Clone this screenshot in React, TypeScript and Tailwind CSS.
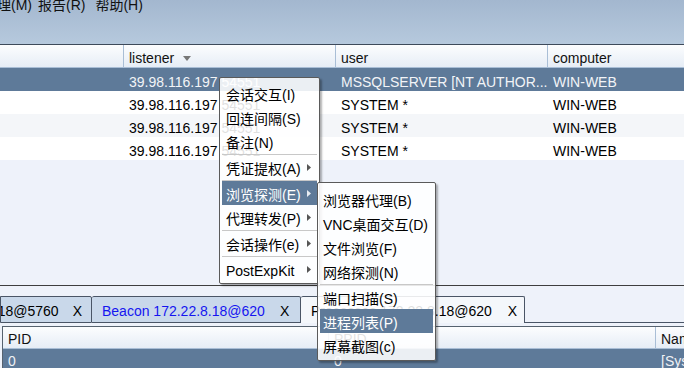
const FONT = "font-['Liberation_Sans','Noto_Sans_CJK_SC',sans-serif]";

const ROWS = [
  { listener: "39.98.116.197 54551", user: "MSSQLSERVER [NT AUTHOR...", computer: "WIN-WEB", bg: "bg-[#5e7a99] text-[#f2f4f7]" },
  { listener: "39.98.116.197 54551", user: "SYSTEM *", computer: "WIN-WEB", bg: "bg-white text-black" },
  { listener: "39.98.116.197 54551", user: "SYSTEM *", computer: "WIN-WEB", bg: "bg-[#f4f6f9] text-black" },
  { listener: "39.98.116.197 54551", user: "SYSTEM *", computer: "WIN-WEB", bg: "bg-white text-black" },
];

type Entry = { label?: string; arrow?: boolean; active?: boolean; sep?: boolean };

const MAIN_MENU: Entry[] = [
  { label: "会话交互(I)" },
  { label: "回连间隔(S)" },
  { label: "备注(N)" },
  { sep: true },
  { label: "凭证提权(A)", arrow: true },
  { sep: true },
  { label: "浏览探测(E)", arrow: true, active: true },
  { label: "代理转发(P)", arrow: true },
  { sep: true },
  { label: "会话操作(e)", arrow: true },
  { sep: true },
  { label: "PostExpKit", arrow: true },
];

const SUB_MENU: Entry[] = [
  { label: "浏览器代理(B)" },
  { label: "VNC桌面交互(D)" },
  { label: "文件浏览(F)" },
  { label: "网络探测(N)" },
  { sep: true },
  { label: "端口扫描(S)" },
  { label: "进程列表(P)", active: true },
  { label: "屏幕截图(c)" },
];

function Arrow({ light }: { light?: boolean }) {
  return (
    <svg width="4" height="7" viewBox="0 0 4 7" className="shrink-0 -mt-[2px]">
      <path d="M0 0 L4 3.5 L0 7 Z" fill={light ? "#e8ecf2" : "#555"} />
    </svg>
  );
}

function Menu({ entries, pl }: { entries: Entry[]; pl: string }) {
  return entries.map((e, i) =>
    e.sep ? (
      <div key={i} className="h-[2px] border-b border-[#c8c8c8]" />
    ) : (
      <div
        key={i}
        className={`h-6 flex items-center ${pl} pr-[6px] pt-[3px] whitespace-nowrap ${
          e.active ? "bg-[#5e7a99] text-white" : "text-black"
        }`}
      >
        <span className="flex-1">{e.label}</span>
        {e.arrow && <Arrow light={e.active} />}
      </div>
    )
  );
}

function HeaderCell({ w, children }: { w: string; children?: React.ReactNode }) {
  return (
    <div className={`${w} shrink-0 h-full flex items-center pl-[5px] pt-[3px] border-r border-[#a9bed6] whitespace-nowrap overflow-hidden`}>
      {children}
    </div>
  );
}

export default function App() {
  return (
    <div className={`relative w-[684px] h-[368px] overflow-hidden bg-[#eef2fa] text-[14px] leading-4 ${FONT}`}>
      {/* menu bar */}
      <div className="h-[44px] overflow-hidden bg-gradient-to-b from-[#a3b7cf] to-[#b6c9dd]">
        <div className="flex -mt-[3px] text-[#111] whitespace-nowrap">
          <span className="-ml-[3px]">理(M)</span>
          <span className="ml-[6px]">报告(R)</span>
          <span className="ml-[10px]">帮助(H)</span>
        </div>
      </div>
      <div className="h-px bg-[#3e4a5a]" />

      {/* sessions table */}
      <div className="h-[23px] flex bg-gradient-to-b from-[#fcfdfe] to-[#e6edf6] border-b border-[#a9bed6] text-[#111]">
        <HeaderCell w="w-[124px]" />
        <HeaderCell w="w-[212px]">
          listener
          <svg width="8" height="5" viewBox="0 0 8 5" className="ml-[9px] mt-[1px]">
            <path d="M0 0 L8 0 L4 5 Z" fill="#777" />
          </svg>
        </HeaderCell>
        <HeaderCell w="w-[212px]">user</HeaderCell>
        <HeaderCell w="w-[200px]">computer</HeaderCell>
      </div>
      {ROWS.map((r, i) => (
        <div key={i} className={`h-[23px] flex items-center pt-[4px] whitespace-nowrap ${r.bg}`}>
          <div className="w-[124px] shrink-0" />
          <div className="w-[212px] shrink-0 pl-[5px] overflow-hidden">{r.listener}</div>
          <div className="w-[212px] shrink-0 pl-[5px] overflow-hidden">{r.user}</div>
          <div className="shrink-0 pl-[5px]">{r.computer}</div>
        </div>
      ))}
      <div className="h-[125px]" />
      <div className="h-px bg-[#3e3e3e]" />

      {/* tabs */}
      <div className="h-[37px] flex items-end whitespace-nowrap">
        <div className="w-[92px] h-[27px] shrink-0 flex items-center justify-end overflow-hidden bg-[#c9d8ea] border border-[#4a5566] rounded-tr-[2px] pr-[9px] pt-[2px] text-black">
          <span className="shrink-0">Beacon 172.22.8.18@5760</span>
          <span className="shrink-0 ml-[14px]">X</span>
        </div>
        <div className="w-[209px] h-[27px] shrink-0 flex items-center bg-[#c9d8ea] border border-l-0 border-[#4a5566] rounded-t-[2px] pl-[10px] pt-[2px] text-[#1515f0]">
          <span>Beacon 172.22.8.18@620</span>
          <span className="ml-[15px] text-black">X</span>
        </div>
        <div className="w-[224px] h-[27px] shrink-0 flex items-center bg-[#f4f7fb] border border-b-0 border-l-0 border-[#4a5566] rounded-t-[2px] pl-[10px] pt-[2px] text-black">
          <span>Processes 172.22.8.18@620</span>
          <span className="ml-[16px]">X</span>
        </div>
        <div className="flex-1 h-px bg-[#4a5566]" />
      </div>
      <div className="h-[3px]" />

      {/* process table */}
      <div className="ml-[2px] border-l border-t border-[#56626f] bg-white">
        <div className="h-[22px] flex bg-gradient-to-b from-[#fcfdfe] to-[#e6edf6] border-b border-[#a9bed6] text-[#111]">
          <HeaderCell w="w-[326px]">PID</HeaderCell>
          <HeaderCell w="w-[327px]">PPID</HeaderCell>
          <HeaderCell w="w-[60px]">Name</HeaderCell>
        </div>
        <div className="h-[20px] flex items-center pt-[4px] bg-[#5e7a99] text-[#eef1f5] whitespace-nowrap">
          <div className="w-[326px] shrink-0 pl-[5px]">0</div>
          <div className="w-[327px] shrink-0 pl-[5px]">0</div>
          <div className="shrink-0 pl-[5px]">[System Process]</div>
        </div>
      </div>

      {/* popup menus */}
      <div className="absolute left-[219px] top-[77px] w-[101px] border border-[#5a5a5a] rounded-[2px] bg-white/[0.88] px-[2px] pt-[3px] pb-[2px] shadow-[2px_2px_2px_rgba(0,0,0,0.3)]">
        <Menu entries={MAIN_MENU} pl="pl-[4px]" />
      </div>
      <div className="absolute left-[317px] top-[182px] w-[119px] border border-[#5a5a5a] rounded-[2px] bg-white/[0.88] px-[2px] pt-[4px] pb-[3px] shadow-[2px_2px_2px_rgba(0,0,0,0.3)]">
        <Menu entries={SUB_MENU} pl="pl-[3px]" />
      </div>
    </div>
  );
}
